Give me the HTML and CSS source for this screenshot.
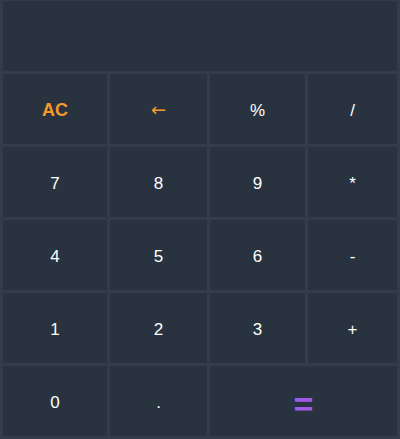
FILE: index.html
```html
<!DOCTYPE html>
<html>
<head>
<meta charset="utf-8">
<link rel="stylesheet" href="styles.css">
</head>
<body>
<div class="calc">
  <div class="display"></div>
  <button class="key accent bold">AC</button>
  <button class="key accent arrow">←</button>
  <button class="key">%</button>
  <button class="key">/</button>
  <button class="key">7</button>
  <button class="key">8</button>
  <button class="key">9</button>
  <button class="key">*</button>
  <button class="key">4</button>
  <button class="key">5</button>
  <button class="key">6</button>
  <button class="key">-</button>
  <button class="key">1</button>
  <button class="key">2</button>
  <button class="key">3</button>
  <button class="key">+</button>
  <button class="key">0</button>
  <button class="key">.</button>
  <button class="key equals">=</button>
</div>
</body>
</html>
```

FILE: styles.css
```css
html, body {
  margin: 0;
  padding: 0;
  background: #323d49;
}
.calc {
  width: 400px;
  height: 439px;
  box-sizing: border-box;
  padding: 1px 3px 3px 3px;
  display: grid;
  grid-template-columns: 104px 97px 95px 89px;
  grid-template-rows: 70px repeat(5, 70px);
  gap: 3px;
  background: #323d49;
}
.display {
  grid-column: 1 / 5;
  background: #29333f;
}
.key {
  border: none;
  margin: 0;
  padding: 3px 0 0 0;
  background: #29333f;
  color: #ffffff;
  font-family: "Liberation Sans", Arial, sans-serif;
  font-size: 17px;
  display: flex;
  align-items: center;
  justify-content: center;
}
.accent {
  color: #f59b2b;
}
.bold {
  font-weight: bold;
  font-size: 18px;
}
.arrow {
  font-family: "DejaVu Sans", sans-serif;
  font-size: 18px;
  padding-top: 0;
}
.equals {
  grid-column: 3 / 5;
  color: #a05ae8;
  font-size: 34px;
  font-weight: bold;
  padding-top: 6px;
}
```
